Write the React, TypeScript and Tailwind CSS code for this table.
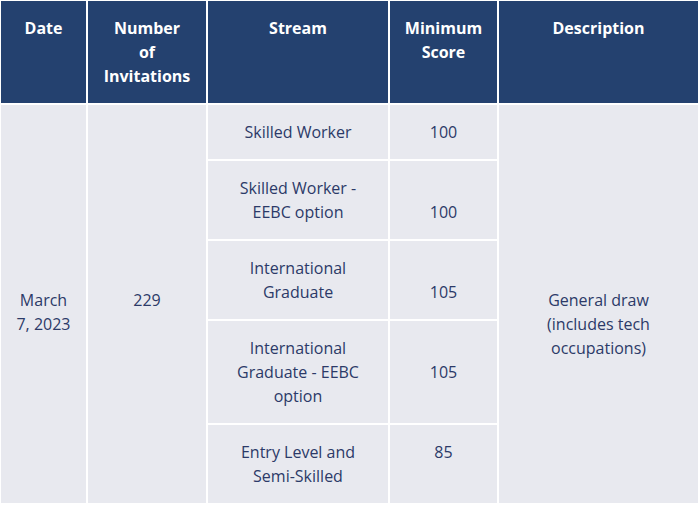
import React from "react";

const H = ({ children }: { children: React.ReactNode }) => (
  <div className="bg-[#24416f] text-white font-bold text-[16px] leading-[24px] text-center pt-[15px] pb-[15px]">
    {children}
  </div>
);

const streams: { name: React.ReactNode; score: string; offset: string }[] = [
  { name: "Skilled Worker", score: "100", offset: "pt-[15px]" },
  { name: <>Skilled Worker -<br />EEBC option</>, score: "100", offset: "pt-[39px]" },
  { name: <>International<br />Graduate</>, score: "105", offset: "pt-[39px]" },
  { name: <>International<br />Graduate - EEBC<br />option</>, score: "105", offset: "pt-[39px]" },
  { name: <>Entry Level and<br />Semi-Skilled</>, score: "85", offset: "pt-[15px]" },
];

export default function App() {
  const body = "bg-[#e8e9ef] text-[#2c3a68] text-[16px] leading-[24px] text-center";
  return (
    <div
      className="w-[699px] bg-white p-[1px] grid gap-[2px] grid-cols-[85px_118px_180px_107px_1fr]"
      style={{ fontFamily: '"Open Sans", "Noto Sans", sans-serif' }}
    >
      <H>Date</H>
      <H>
        Number
        <br />
        of
        <br />
        Invitations
      </H>
      <H>Stream</H>
      <H>
        Minimum
        <br />
        Score
      </H>
      <H>Description</H>

      <div className={`${body} row-span-5 col-start-1 row-start-2 pt-[183px]`}>
        March
        <br />7, 2023
      </div>
      <div className={`${body} row-span-5 col-start-2 row-start-2 pt-[183px]`}>229</div>
      <div className={`${body} row-span-5 col-start-5 row-start-2 pt-[183px]`}>
        General draw
        <br />
        (includes tech
        <br />
        occupations)
      </div>

      {streams.map((s, i) => (
        <React.Fragment key={i}>
          <div className={`${body} col-start-3 py-[15px]`}>{s.name}</div>
          <div className={`${body} col-start-4 ${s.offset}`}>{s.score}</div>
        </React.Fragment>
      ))}
    </div>
  );
}
